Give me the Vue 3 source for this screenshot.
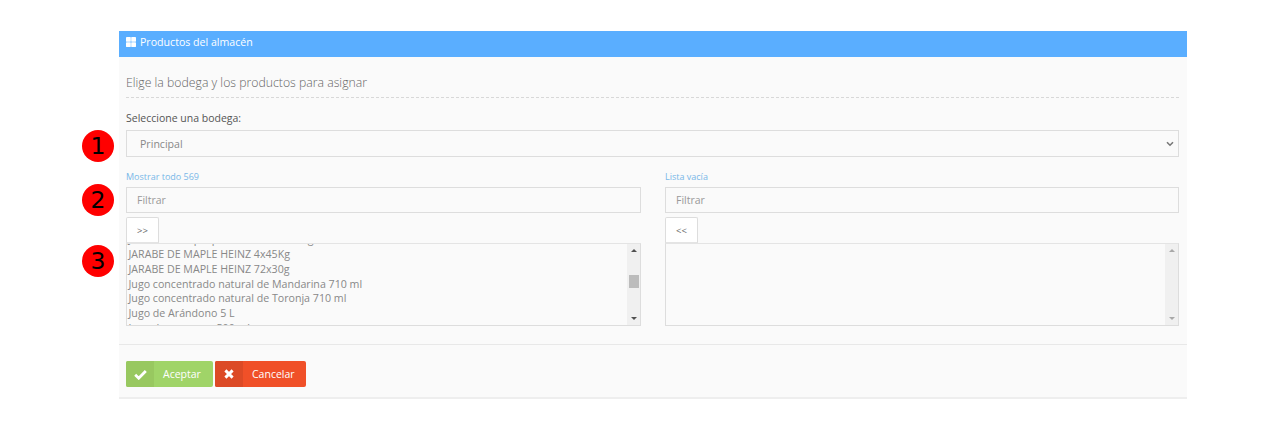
<script setup>
const products = [
  'Jarabe de maple puro Heinz 12x355 g',
  'JARABE DE MAPLE HEINZ 4x45Kg',
  'JARABE DE MAPLE HEINZ 72x30g',
  'Jugo concentrado natural de Mandarina 710 ml',
  'Jugo concentrado natural de Toronja 710 ml',
  'Jugo de Arándono 5 L',
  'Jugo de manzana 500 ml'
]
</script>

<template>
  <div class="page">
    <section class="panel">
      <header class="head">
        <svg class="grid-icon" viewBox="0 0 10 10" width="10" height="10">
          <rect x="0" y="0" width="4.8" height="4.7" rx="0.4" />
          <rect x="5.2" y="0" width="4.8" height="4.7" rx="0.4" />
          <rect x="0" y="5.3" width="4.8" height="4.7" rx="0.4" />
          <rect x="5.2" y="5.3" width="4.8" height="4.7" rx="0.4" />
        </svg>
        <span>Productos del almacén</span>
      </header>

      <div class="body">
        <h3 class="title">Elige la bodega y los productos para asignar</h3>
        <label class="lbl">Seleccione una bodega:</label>
        <div class="select">
          <span>Principal</span>
          <svg viewBox="0 0 8 6" width="8" height="6"><path d="M1 1.2 4 4.2 7 1.2" fill="none" stroke="#777" stroke-width="1.6" /></svg>
        </div>

        <div class="dual">
          <div class="col">
            <div class="info">Mostrar todo 569</div>
            <input class="filter" placeholder="Filtrar" />
            <button class="move">&gt;&gt;</button>
            <div class="box">
              <div class="rows">
                <div v-for="p in products" :key="p" class="row">{{ p }}</div>
              </div>
              <div class="sb">
                <i class="up"></i>
                <i class="thumb"></i>
                <i class="down"></i>
              </div>
            </div>
          </div>
          <div class="col">
            <div class="info">Lista vacía</div>
            <input class="filter" placeholder="Filtrar" />
            <button class="move">&lt;&lt;</button>
            <div class="box">
              <div class="rows"></div>
              <div class="sb light">
                <i class="up"></i>
                <i class="down"></i>
              </div>
            </div>
          </div>
        </div>
      </div>

      <footer class="foot">
        <button class="act ok">
          <span class="ico">
            <svg viewBox="0 0 13 11" width="13" height="11"><path d="M1.2 5.8 4.7 9.2 11.8 2" fill="none" stroke="#fff" stroke-width="2.8" /></svg>
          </span>
          <span class="txt">Aceptar</span>
        </button>
        <button class="act no">
          <span class="ico">
            <svg viewBox="0 0 10 10" width="10" height="10"><path d="M1.4 1.4 8.6 8.6M8.6 1.4 1.4 8.6" fill="none" stroke="#fff" stroke-width="2.9" /></svg>
          </span>
          <span class="txt">Cancelar</span>
        </button>
      </footer>
    </section>

    <div class="mark m1">1</div>
    <div class="mark m2">2</div>
    <div class="mark m3">3</div>
  </div>
</template>

<style scoped>
.page {
  position: relative;
  width: 1270px;
  height: 446px;
  padding: 31px 83px 0 119px;
  box-sizing: border-box;
  background: #fff;
  font-family: "Open Sans", "Liberation Sans", sans-serif;
  overflow: hidden;
}
.panel {
  background: #fafafa;
  height: 368px;
  display: flex;
  flex-direction: column;
  border-bottom: 2px solid #eeeeee;
  box-sizing: border-box;
}
.head {
  height: 26px;
  flex: none;
  background: #5aaeff;
  color: #fff;
  font-size: 10.6px;
  display: flex;
  align-items: center;
  gap: 4px;
  padding: 0 7px 5px;
  box-sizing: border-box;
}
.grid-icon { fill: #fff; }
.body { padding: 0 8px 0 7px; flex: 1; }
.title {
  margin: 0;
  height: 41px;
  box-sizing: border-box;
  padding-top: 17px;
  font-size: 12.25px;
  line-height: 17px;
  font-weight: 300;
  color: #666;
  border-bottom: 1px dashed #d8d8d8;
}
.lbl {
  display: block;
  margin-top: 13px;
  font-size: 10.5px;
  line-height: 14px;
  color: #555;
}
.select {
  margin-top: 5px;
  height: 27px;
  box-sizing: border-box;
  border: 1px solid #dddddd;
  background: #fafafa;
  display: flex;
  align-items: center;
  justify-content: space-between;
  padding: 0 4px 0 13px;
  font-size: 10.6px;
  color: #888;
}
.dual {
  display: grid;
  grid-template-columns: 515px 514px;
  gap: 24px;
  margin-top: 14px;
}
.col { display: flex; flex-direction: column; align-items: flex-start; }
.info {
  font-size: 9px;
  line-height: 12px;
  color: #79b8e8;
  height: 12px;
}
.filter {
  margin-top: 4px;
  width: 100%;
  height: 26px;
  box-sizing: border-box;
  border: 1px solid #dddddd;
  background: #fafafa;
  padding: 0 10px;
  font: 10.5px "Open Sans", sans-serif;
  color: #888;
  outline: none;
}
.filter::placeholder { color: #999; opacity: 1; }
.move {
  margin-top: 4px;
  width: 33px;
  height: 26px;
  box-sizing: border-box;
  border: 1px solid #dddddd;
  border-bottom-color: #e4e4e4;
  border-radius: 2px 2px 0 0;
  background: #fff;
  padding: 0;
  font: 9.5px "Open Sans", sans-serif;
  color: #666;
}
.box {
  width: 100%;
  height: 83px;
  box-sizing: border-box;
  border: 1px solid #dddddd;
  border-top-color: #e4e4e4;
  background: #fafafa;
  display: flex;
  overflow: hidden;
}
.rows { flex: 1; overflow: hidden; padding-left: 1.5px; }
.row {
  font-size: 10.65px;
  line-height: 14.85px;
  height: 14.85px;
  color: #888;
  white-space: nowrap;
}
.row:first-child { margin-top: -12px; }
.sb {
  width: 13px;
  flex: none;
  background: #f0f0f0;
  display: flex;
  flex-direction: column;
  align-items: center;
  position: relative;
}
.up, .down {
  position: absolute;
  width: 0;
  height: 0;
  border-left: 3.5px solid transparent;
  border-right: 3.5px solid transparent;
}
.up { top: 5px; border-bottom: 3.5px solid #505050; }
.down { bottom: 5px; border-top: 3.5px solid #505050; }
.sb.light .up { border-bottom-color: #a8a8a8; }
.sb.light .down { border-top-color: #a8a8a8; }
.thumb {
  position: absolute;
  top: 31px;
  width: 10px;
  height: 13px;
  background: #bcbcbc;
}
.foot {
  flex: none;
  height: 53px;
  box-sizing: border-box;
  border-top: 1px solid #e8e8e8;
  padding: 16px 7px 0;
  display: flex;
  gap: 2px;
  align-items: flex-start;
}
.act {
  height: 26px;
  padding: 0;
  border: 0;
  border-radius: 2px;
  display: flex;
  align-items: stretch;
  color: #fff;
  font: 10.5px "Open Sans", sans-serif;
  overflow: hidden;
}
.ico {
  width: 28px;
  display: flex;
  align-items: center;
  justify-content: center;
}
.txt { display: flex; align-items: center; }
.ok { width: 87px; background: #a0d468; }
.ok .ico { background: #98c860; }
.ok .txt { padding-left: 9px; }
.no { width: 91px; background: #f05028; }
.no .ico { background: #dc4a26; }
.no .txt { padding-left: 9px; }
.mark {
  position: absolute;
  left: 82px;
  width: 32px;
  height: 32px;
  border-radius: 50%;
  background: #ff0000;
  color: #000;
  font: 23.5px/32px "DejaVu Sans", sans-serif;
  text-align: center;
}
.m1 { top: 130px; }
.m2 { top: 184px; }
.m3 { top: 245px; }
</style>
